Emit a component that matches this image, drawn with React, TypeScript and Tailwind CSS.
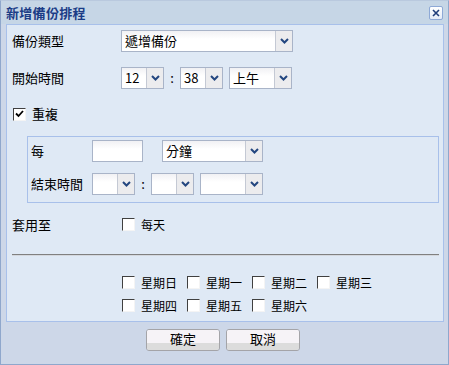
import React from 'react';

const font = { fontFamily: '"Noto Sans CJK TC", "Noto Sans CJK SC", sans-serif' };

function Chevron() {
  return (
    <svg width="9" height="6" viewBox="0 0 9 6">
      <path d="M1 1 L4.5 4.5 L8 1" fill="none" stroke="#23467f" strokeWidth="2" />
    </svg>
  );
}

function Select({ w, value }: { w: number; value?: string }) {
  return (
    <div
      className="flex h-[22px] border border-[#a9b4c8] bg-gradient-to-b from-[#f1f1f4] to-white to-[40%]"
      style={{ width: w }}
    >
      <div className="flex-1 pl-[3px] text-[13px] leading-[20px] text-black">{value}</div>
      <div className="flex w-[17px] items-center justify-center border-l border-[#c4c9d4] bg-[#ececee]">
        <Chevron />
      </div>
    </div>
  );
}

function Check({ checked }: { checked?: boolean }) {
  return (
    <div className="flex h-[13px] w-[13px] items-center justify-center border border-t-[#404040] border-l-[#404040] border-r-[#f4f4f4] border-b-[#f4f4f4] bg-white">
      {checked && (
        <svg width="9" height="8" viewBox="0 0 9 8">
          <path d="M1 3.5 L3.5 6 L8 1" fill="none" stroke="#000" strokeWidth="1.8" />
        </svg>
      )}
    </div>
  );
}

function CheckLabel({ label, checked }: { label: string; checked?: boolean }) {
  return (
    <div className="flex w-[65px] items-center gap-[6px]">
      <Check checked={checked} />
      <span className="text-[12px] leading-[14px] text-black">{label}</span>
    </div>
  );
}

function Button({ label }: { label: string }) {
  return (
    <div className="flex h-[22px] w-[74px] flex-col overflow-hidden rounded-[3px] border border-[#a4a4a8] shadow-[1px_1px_0_#fff_inset]">
      <div className="flex h-[13px] items-end justify-center bg-[#f6f3f7] text-[13px] leading-[16px] text-black">
        <span className="translate-y-[4px]">{label}</span>
      </div>
      <div className="flex-1 bg-[#dcdcdc]" />
    </div>
  );
}

export default function App() {
  return (
    <div style={font} className="h-[365px] w-[449px] overflow-hidden">
      <div className="flex h-[365px] w-[449px] flex-col border border-[#8fa7cc] border-t-[#b9c9de] bg-[#cdd7e8]">
        {/* title bar */}
        <div className="flex h-[23px] items-center justify-between bg-[#c6d6e6] pl-[5px] pr-[5px]">
          <span className="pt-[1px] text-[13px] font-bold tracking-[0.3px] text-[#1b3c86]">新增備份排程</span>
          <div className="flex h-[14px] w-[14px] items-center justify-center rounded-[2px] border border-[#8ea9d6] bg-gradient-to-b from-white to-[#e4ebf7]">
            <svg width="8" height="8" viewBox="0 0 8 8">
              <path d="M1 1 L7 7 M7 1 L1 7" stroke="#1f3d7a" strokeWidth="1.6" />
            </svg>
          </div>
        </div>

        {/* main panel */}
        <div className="ml-[5px] h-[298px] w-[438px] border border-[#a8c0ea] bg-[#dfe9f5] pl-[5px] text-[13px] text-black">
          <div className="mt-[5px] flex h-[22px] items-center">
            <span className="w-[109px]">備份類型</span>
            <Select w={172} value="遞增備份" />
          </div>

          <div className="mt-[15px] flex h-[22px] items-center">
            <span className="w-[109px]">開始時間</span>
            <Select w={43} value="12" />
            <span className="w-[16px] text-center">:</span>
            <Select w={43} value="38" />
            <span className="w-[6px]" />
            <Select w={63} value="上午" />
          </div>

          <div className="mt-[18px] flex h-[14px] items-center gap-[6px] pl-[1px]">
            <Check checked />
            <span>重複</span>
          </div>

          {/* repeat group */}
          <div className="ml-[15px] mt-[15px] h-[67px] w-[412px] border border-[#a8c0ea] pl-[3px] pt-[3px]">
            <div className="flex h-[22px] items-center">
              <span className="w-[61px]">每</span>
              <div className="h-[22px] w-[51px] border border-[#a9b4c8] bg-gradient-to-b from-[#f1f1f4] to-white to-[40%]" />
              <span className="w-[19px]" />
              <Select w={101} value="分鐘" />
            </div>
            <div className="mt-[11px] flex h-[22px] items-center">
              <span className="w-[61px]">結束時間</span>
              <Select w={43} />
              <span className="w-[16px] text-center">:</span>
              <Select w={43} />
              <span className="w-[6px]" />
              <Select w={63} />
            </div>
          </div>

          <div className="mt-[14px] flex h-[15px] items-center">
            <span className="w-[110px]">套用至</span>
            <CheckLabel label="每天" />
          </div>

          <div className="mt-[22px] h-[2px] w-[427px] border-t border-[#808080] bg-[#d4d8de]" />

          <div className="ml-[110px] mt-[20px] flex flex-col gap-[10px]">
            <div className="flex h-[13px]">
              <CheckLabel label="星期日" />
              <CheckLabel label="星期一" />
              <CheckLabel label="星期二" />
              <CheckLabel label="星期三" />
            </div>
            <div className="flex h-[13px]">
              <CheckLabel label="星期四" />
              <CheckLabel label="星期五" />
              <CheckLabel label="星期六" />
            </div>
          </div>
        </div>

        {/* footer */}
        <div className="mt-[7px] flex gap-[6px] pl-[145px]">
          <Button label="確定" />
          <Button label="取消" />
        </div>
      </div>
    </div>
  );
}
